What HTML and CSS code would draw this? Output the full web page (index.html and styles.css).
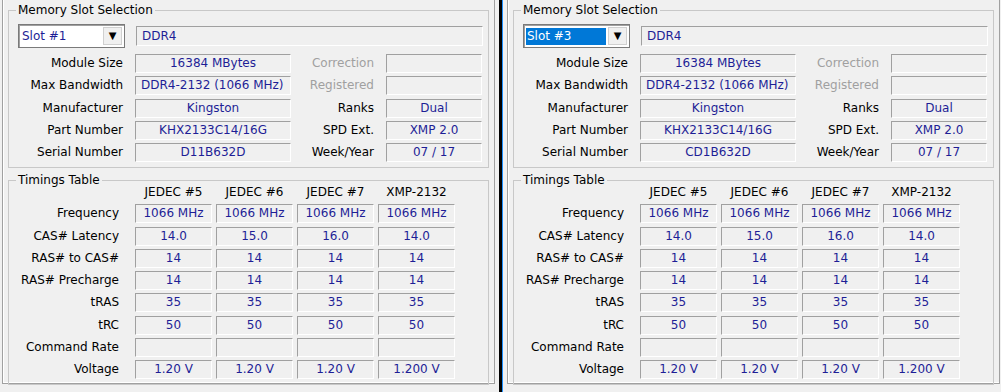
FILE: index.html
```html
<!DOCTYPE html>
<html lang="en">
<head>
  <meta charset="UTF-8">
  <title>SPD</title>
  <link rel="stylesheet" href="styles.css">
</head>
<body>
  <div class="screen">
    <section class="pane">
      <div class="frame">
        <fieldset class="group slot-group">
          <legend>Memory Slot Selection</legend>
          <div class="slot-row">
            <div class="combo"><span class="combo-text">Slot #1</span><span class="combo-btn">&#9660;</span></div>
            <div class="field field-left wide">DDR4</div>
          </div>
          <div class="info">
            <span class="lbl">Module Size</span><div class="field">16384 MBytes</div>
            <span class="lbl off">Correction</span><div class="field"></div>
            <span class="lbl">Max Bandwidth</span><div class="field field-left">DDR4-2132 (1066 MHz)</div>
            <span class="lbl off">Registered</span><div class="field"></div>
            <span class="lbl">Manufacturer</span><div class="field">Kingston</div>
            <span class="lbl">Ranks</span><div class="field">Dual</div>
            <span class="lbl">Part Number</span><div class="field">KHX2133C14/16G</div>
            <span class="lbl">SPD Ext.</span><div class="field">XMP 2.0</div>
            <span class="lbl">Serial Number</span><div class="field">D11B632D</div>
            <span class="lbl">Week/Year</span><div class="field">07 / 17</div>
          </div>
        </fieldset>
        <fieldset class="group timing-group">
          <legend>Timings Table</legend>
          <div class="timings">
            <span></span><span class="head">JEDEC #5</span><span class="head">JEDEC #6</span><span class="head">JEDEC #7</span><span class="head">XMP-2132</span>
            <span class="lbl">Frequency</span><div class="field">1066 MHz</div><div class="field">1066 MHz</div><div class="field">1066 MHz</div><div class="field">1066 MHz</div>
            <span class="lbl">CAS# Latency</span><div class="field">14.0</div><div class="field">15.0</div><div class="field">16.0</div><div class="field">14.0</div>
            <span class="lbl">RAS# to CAS#</span><div class="field">14</div><div class="field">14</div><div class="field">14</div><div class="field">14</div>
            <span class="lbl">RAS# Precharge</span><div class="field">14</div><div class="field">14</div><div class="field">14</div><div class="field">14</div>
            <span class="lbl">tRAS</span><div class="field">35</div><div class="field">35</div><div class="field">35</div><div class="field">35</div>
            <span class="lbl">tRC</span><div class="field">50</div><div class="field">50</div><div class="field">50</div><div class="field">50</div>
            <span class="lbl">Command Rate</span><div class="field"></div><div class="field"></div><div class="field"></div><div class="field"></div>
            <span class="lbl">Voltage</span><div class="field">1.20 V</div><div class="field">1.20 V</div><div class="field">1.20 V</div><div class="field">1.200 V</div>
          </div>
        </fieldset>
      </div>
    </section>

    <div class="divider"></div>

    <section class="pane">
      <div class="frame">
        <fieldset class="group slot-group">
          <legend>Memory Slot Selection</legend>
          <div class="slot-row">
            <div class="combo"><span class="combo-text selected">Slot #3</span><span class="combo-btn">&#9660;</span></div>
            <div class="field field-left wide">DDR4</div>
          </div>
          <div class="info">
            <span class="lbl">Module Size</span><div class="field">16384 MBytes</div>
            <span class="lbl off">Correction</span><div class="field"></div>
            <span class="lbl">Max Bandwidth</span><div class="field field-left">DDR4-2132 (1066 MHz)</div>
            <span class="lbl off">Registered</span><div class="field"></div>
            <span class="lbl">Manufacturer</span><div class="field">Kingston</div>
            <span class="lbl">Ranks</span><div class="field">Dual</div>
            <span class="lbl">Part Number</span><div class="field">KHX2133C14/16G</div>
            <span class="lbl">SPD Ext.</span><div class="field">XMP 2.0</div>
            <span class="lbl">Serial Number</span><div class="field">CD1B632D</div>
            <span class="lbl">Week/Year</span><div class="field">07 / 17</div>
          </div>
        </fieldset>
        <fieldset class="group timing-group">
          <legend>Timings Table</legend>
          <div class="timings">
            <span></span><span class="head">JEDEC #5</span><span class="head">JEDEC #6</span><span class="head">JEDEC #7</span><span class="head">XMP-2132</span>
            <span class="lbl">Frequency</span><div class="field">1066 MHz</div><div class="field">1066 MHz</div><div class="field">1066 MHz</div><div class="field">1066 MHz</div>
            <span class="lbl">CAS# Latency</span><div class="field">14.0</div><div class="field">15.0</div><div class="field">16.0</div><div class="field">14.0</div>
            <span class="lbl">RAS# to CAS#</span><div class="field">14</div><div class="field">14</div><div class="field">14</div><div class="field">14</div>
            <span class="lbl">RAS# Precharge</span><div class="field">14</div><div class="field">14</div><div class="field">14</div><div class="field">14</div>
            <span class="lbl">tRAS</span><div class="field">35</div><div class="field">35</div><div class="field">35</div><div class="field">35</div>
            <span class="lbl">tRC</span><div class="field">50</div><div class="field">50</div><div class="field">50</div><div class="field">50</div>
            <span class="lbl">Command Rate</span><div class="field"></div><div class="field"></div><div class="field"></div><div class="field"></div>
            <span class="lbl">Voltage</span><div class="field">1.20 V</div><div class="field">1.20 V</div><div class="field">1.20 V</div><div class="field">1.200 V</div>
          </div>
        </fieldset>
      </div>
    </section>
  </div>
</body>
</html>
```

FILE: styles.css
```css
body {
  margin: 0;
  background: #f0f0f0;
  font-family: "DejaVu Sans", sans-serif;
  font-size: 12px;
  color: #000;
}
.screen {
  display: flex;
  width: 1001px;
  height: 392px;
  overflow: hidden;
}
.pane {
  width: 499px;
  flex: none;
  padding-left: 2px;
  box-sizing: border-box;
}
.frame {
  width: 493px;
  height: 384px;
  box-sizing: border-box;
  border: 1px solid #a0a0a0;
  border-top: none;
  box-shadow: inset 1px 0 0 #fff, inset 0 -1px 0 #fff;
  padding: 3px 5px 0 5px;
}
.divider {
  width: 6px;
  flex: none;
  background: #000;
  border-right: 2px solid #f0f0f0;
  box-shadow: inset -1px 0 0 #1e90ff;
  box-sizing: border-box;
}
.group {
  margin: 0;
  border: 1px solid #c8c8c8;
  border-radius: 0;
  padding: 7px 5px 5px 9px;
}
.group legend {
  padding: 0 2px;
  margin-left: -2px;
  line-height: 14px;
}
.timing-group {
  margin-top: 5px;
  padding-top: 0;
  height: 212px;
  box-sizing: border-box;
}
.slot-row {
  display: flex;
  align-items: center;
  gap: 11px;
}
.combo {
  width: 107px;
  height: 24px;
  box-sizing: border-box;
  border: 1px solid #7a7a7a;
  box-shadow: inset 1px 1px 0 #a0a0a0;
  background: #fff;
  display: flex;
  align-items: center;
  padding: 2px;
}
.combo-text {
  flex: 1;
  color: #1e1e96;
  height: 17px;
  line-height: 17px;
  padding-left: 1px;
}
.combo-text.selected {
  background: #0078d7;
  color: #fff;
}
.combo-btn {
  width: 19px;
  height: 18px;
  margin-left: 2px;
  background: #f0f0f0;
  border: 1px solid #d0d0d0;
  box-sizing: border-box;
  font-size: 10px;
  line-height: 16px;
  text-align: center;
  color: #000;
}
.field {
  height: 19px;
  box-sizing: border-box;
  border: 1px solid;
  border-color: #a0a0a0 #fff #fff #a0a0a0;
  color: #1e1e96;
  text-align: center;
  line-height: 17px;
  white-space: nowrap;
  overflow: hidden;
}
.field-left {
  text-align: left;
  padding-left: 5px;
}
.wide {
  flex: 1;
  height: 20px;
  line-height: 18px;
}
.info {
  display: grid;
  grid-template-columns: 105px 156px 71px 96px;
  column-gap: 12px;
  row-gap: 3.25px;
  margin-top: 6px;
  align-items: center;
}
.lbl {
  text-align: right;
  white-space: nowrap;
  line-height: 19px;
}
.lbl.off {
  color: #a0a0a0;
}
.timings {
  display: grid;
  grid-template-columns: 113px 77px 77px 77px 77px;
  column-gap: 4px;
  row-gap: 3.3px;
  align-items: center;
}
.timings > .lbl {
  margin-right: 12px;
}
.head {
  text-align: center;
  line-height: 14px;
  margin-top: -2px;
  margin-bottom: 2px;
}
```
